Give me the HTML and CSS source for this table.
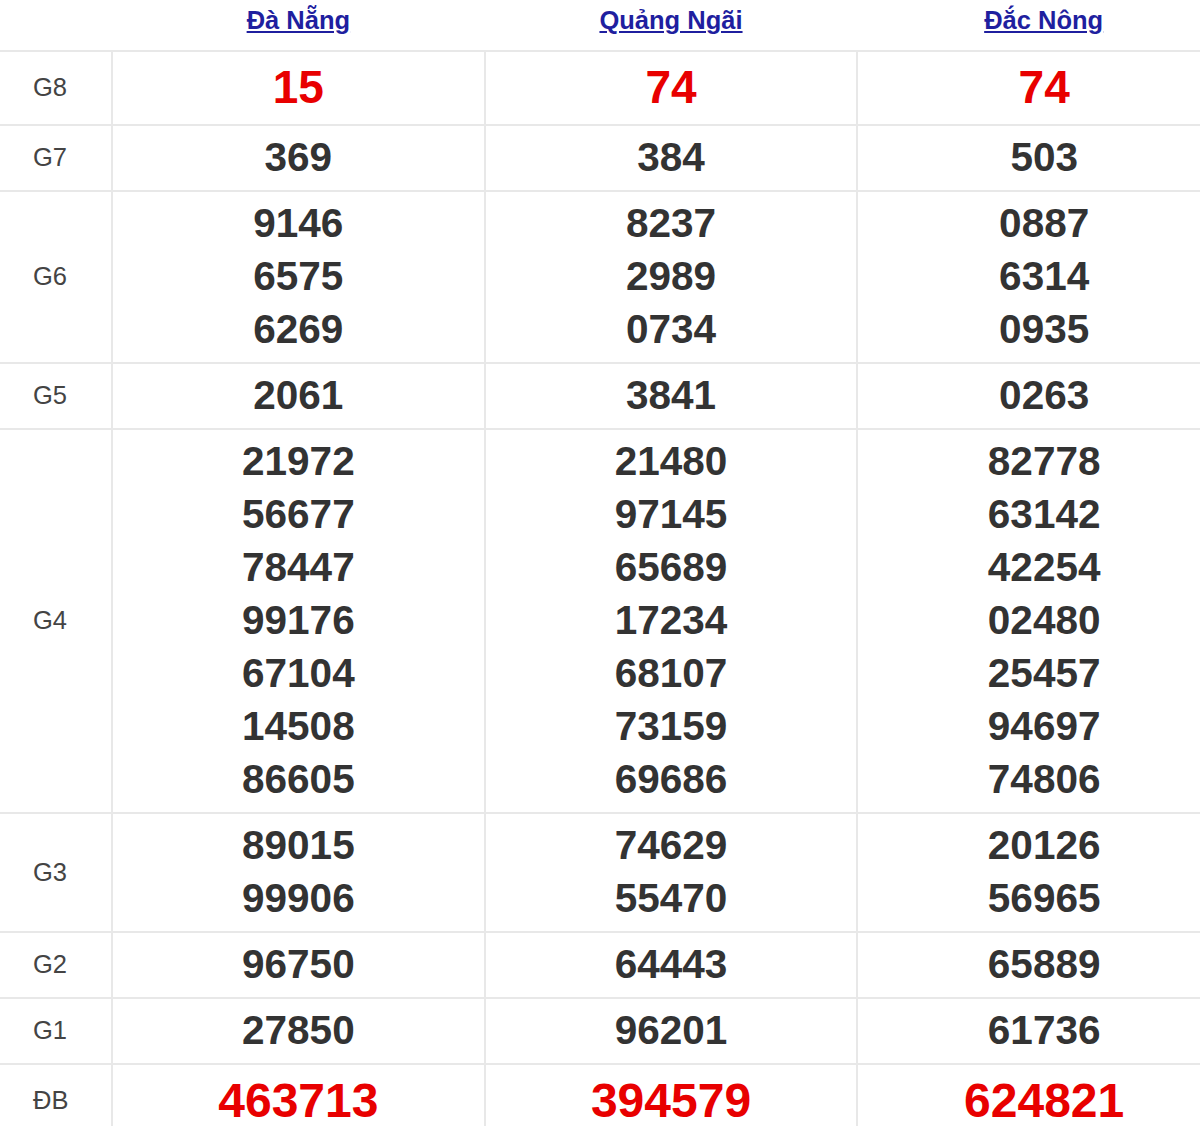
FILE: index.html
```html
<!DOCTYPE html>
<html lang="vi">
<head>
<meta charset="utf-8">
<title>Kết quả xổ số</title>
<link rel="stylesheet" href="styles.css">
</head>
<body>
<table class="kq">
  <colgroup>
    <col class="c-label">
    <col class="c-prov">
    <col class="c-prov">
    <col class="c-prov">
  </colgroup>
  <thead>
    <tr>
      <th></th>
      <th><a href="#">Đà Nẵng</a></th>
      <th><a href="#">Quảng Ngãi</a></th>
      <th><a href="#">Đắc Nông</a></th>
    </tr>
  </thead>
  <tbody>
    <tr class="big">
      <td class="lbl">G8</td>
      <td class="red">15</td>
      <td class="red">74</td>
      <td class="red">74</td>
    </tr>
    <tr>
      <td class="lbl">G7</td>
      <td><div>369</div></td>
      <td><div>384</div></td>
      <td><div>503</div></td>
    </tr>
    <tr>
      <td class="lbl">G6</td>
      <td><div>9146</div><div>6575</div><div>6269</div></td>
      <td><div>8237</div><div>2989</div><div>0734</div></td>
      <td><div>0887</div><div>6314</div><div>0935</div></td>
    </tr>
    <tr>
      <td class="lbl">G5</td>
      <td><div>2061</div></td>
      <td><div>3841</div></td>
      <td><div>0263</div></td>
    </tr>
    <tr>
      <td class="lbl">G4</td>
      <td><div>21972</div><div>56677</div><div>78447</div><div>99176</div><div>67104</div><div>14508</div><div>86605</div></td>
      <td><div>21480</div><div>97145</div><div>65689</div><div>17234</div><div>68107</div><div>73159</div><div>69686</div></td>
      <td><div>82778</div><div>63142</div><div>42254</div><div>02480</div><div>25457</div><div>94697</div><div>74806</div></td>
    </tr>
    <tr>
      <td class="lbl">G3</td>
      <td><div>89015</div><div>99906</div></td>
      <td><div>74629</div><div>55470</div></td>
      <td><div>20126</div><div>56965</div></td>
    </tr>
    <tr>
      <td class="lbl">G2</td>
      <td><div>96750</div></td>
      <td><div>64443</div></td>
      <td><div>65889</div></td>
    </tr>
    <tr>
      <td class="lbl">G1</td>
      <td><div>27850</div></td>
      <td><div>96201</div></td>
      <td><div>61736</div></td>
    </tr>
    <tr class="db">
      <td class="lbl">ĐB</td>
      <td class="red">463713</td>
      <td class="red">394579</td>
      <td class="red">624821</td>
    </tr>
  </tbody>
</table>
</body>
</html>
```

FILE: styles.css
```css
html, body {
  margin: 0;
  padding: 0;
  overflow: hidden;
  background: #fff;
}

body {
  font-family: "Liberation Sans", Arial, sans-serif;
  color: #333;
}

.kq {
  width: 1230px;
  table-layout: fixed;
  border-collapse: collapse;
  border-style: hidden;
}

.c-label { width: 112px; }
.c-prov { width: 372.6px; }

.kq th {
  border: none;
  padding: 5px 0 15px;
  height: 30px;
  line-height: 30px;
  font-size: 25.5px;
  font-weight: bold;
  text-align: center;
}

.kq th a {
  color: #1f1f9f;
  text-decoration: underline;
  text-decoration-thickness: 2px;
  text-underline-offset: 2px;
}

.kq td {
  border: 2px solid #e8e8e8;
  padding: 5px 0 6px;
  text-align: center;
  vertical-align: middle;
  font-size: 40.5px;
  font-weight: bold;
  line-height: 53px;
  color: #333;
}

.kq td.lbl {
  text-align: left;
  padding-left: 33px;
  font-size: 25.5px;
  font-weight: normal;
  color: #444;
}

.kq td.red {
  color: #e80000;
}

.big td.red {
  font-size: 46px;
  line-height: 61px;
}

.db td.red {
  font-size: 48px;
  line-height: 61px;
}
```
